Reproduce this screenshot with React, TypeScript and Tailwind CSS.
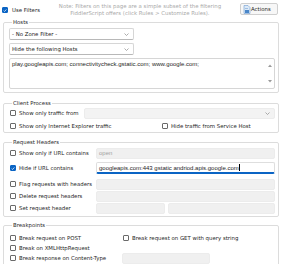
import React from "react";

const FONT = "font-['DejaVu_Sans','Liberation_Sans',sans-serif]";
const FIELD_FONT = "font-['Liberation_Sans',sans-serif] text-[6px]";

function Check({ on = false }: { on?: boolean }) {
  return (
    <span
      className={
        on
          ? "shrink-0 w-[6px] h-[6px] rounded-[1px] bg-[#0a64c4] border border-[#0a64c4] flex items-center justify-center"
          : "shrink-0 w-[6px] h-[6px] rounded-[1px] bg-white border border-[#6a6a6a]"
      }
    >
      {on && (
        <svg width="5" height="5" viewBox="0 0 5 5">
          <path d="M0.8 2.6 L2 3.7 L4.2 1.2" fill="none" stroke="#fff" strokeWidth="0.9" />
        </svg>
      )}
    </span>
  );
}

function Chevron() {
  return (
    <svg width="5" height="3" viewBox="0 0 5 3" className="shrink-0">
      <path d="M0.5 0.5 L2.5 2.5 L4.5 0.5" fill="none" stroke="#8a8a8a" strokeWidth="0.7" />
    </svg>
  );
}

function Select({ label, className }: { label: string; className?: string }) {
  return (
    <div
      className={
        "h-[12px] flex items-center justify-between pl-[2px] pr-[4px] rounded-[2px] border border-[#d6d6d6] border-b-[#b8b8b8] bg-white " +
        (className ?? "")
      }
    >
      <span>{label}</span>
      <Chevron />
    </div>
  );
}

function Box({ text, className }: { text?: string; className?: string }) {
  return (
    <div
      className={
        "h-[11px] flex items-center pl-[2px] rounded-[2px] bg-[#f0f0f0] border border-[#ececec] text-[#a3a3a3] " +
        FIELD_FONT +
        " " +
        (className ?? "")
      }
    >
      {text}
    </div>
  );
}

function Group({ title, className, children }: { title: string; className?: string; children: React.ReactNode }) {
  return (
    <fieldset className={"ml-[3px] w-[276px] border border-[#dcdcdc] rounded-[2px] pl-[5px] pr-[3px] " + (className ?? "")}>
      <legend className="ml-[3px] px-[1px] leading-[8px] text-[#2a2a2a]">{title}</legend>
      {children}
    </fieldset>
  );
}

function Row({ label, on, children }: { label: string; on?: boolean; children?: React.ReactNode }) {
  return (
    <div className="flex items-center h-[12px]">
      <div className="flex items-center w-[87px] shrink-0 pl-[1px]">
        <Check on={on} />
        <span className="ml-[3px] whitespace-nowrap">{label}</span>
      </div>
      {children}
    </div>
  );
}

export default function App() {
  return (
    <div className={"w-[300px] h-[264px] overflow-hidden bg-white text-[5.4px] leading-[8px] text-[#262626] " + FONT}>
      {/* top bar */}
      <div className="flex items-start h-[18px] pl-[2px] pr-[22px]">
        <div className="flex items-center mt-[6px]">
          <Check on />
          <span className="ml-[4px]">Use Filters</span>
        </div>
        <div className="flex-1 text-center text-[#a9a9a9] leading-[7px] mt-[3px] whitespace-nowrap">
          Note: Filters on this page are a simple subset of the filtering
          <br />
          FiddlerScript offers (click Rules &gt; Customize Rules).
        </div>
        <div className="mt-[3px] w-[38px] h-[12px] flex items-center pl-[2px] rounded-[2px] border border-[#cfcfcf] bg-[#f7f7f7]">
          <svg width="8" height="9" viewBox="0 0 8 9" className="shrink-0">
            <path d="M1 0.5 H5 L7 2.5 V8.5 H1 Z" fill="#dbe9f7" stroke="#6d9bd1" strokeWidth="0.6" />
            <rect x="2" y="5" width="4" height="3" fill="#4a86c8" />
            <rect x="2" y="3" width="3" height="0.8" fill="#8fb3dc" />
          </svg>
          <span>Actions</span>
        </div>
      </div>

      <Group title="Hosts" className="pt-[2px] pb-[3px]">
        <Select label="- No Zone Filter -" className="w-[125px]" />
        <Select label="Hide the following Hosts" className="w-[125px] mt-[3px]" />
        <div className="mt-[3px] h-[31px] flex rounded-[2px] border border-[#d6d6d6] bg-white">
          <div className={"flex-1 pl-[2px] pt-[1px] " + FIELD_FONT}>
            play.googleapis.com; connectivitycheck.gstatic.com; www.google.com;
          </div>
          <div className="w-[8px] flex flex-col items-center justify-between py-[5px]">
            <svg width="4" height="3" viewBox="0 0 4 3">
              <path d="M0 3 L2 0.5 L4 3 Z" fill="#9a9a9a" />
            </svg>
            <svg width="4" height="3" viewBox="0 0 4 3">
              <path d="M0 0 L2 2.5 L4 0 Z" fill="#9a9a9a" />
            </svg>
          </div>
        </div>
      </Group>

      <Group title="Client Process" className="mt-[6px]">
        <div className="flex items-center h-[12px]">
          <div className="flex items-center w-[75px] shrink-0 pl-[1px]">
            <Check />
            <span className="ml-[3px] whitespace-nowrap">Show only traffic from</span>
          </div>
          <div className="flex-1 h-[11px] flex items-center justify-end pr-[4px] rounded-[2px] bg-[#f3f3f3] border border-[#ececec]">
            <Chevron />
          </div>
        </div>
        <div className="flex items-center h-[12px] mt-[1px]">
          <div className="flex items-center w-[153px] shrink-0 pl-[1px]">
            <Check />
            <span className="ml-[3px] whitespace-nowrap">Show only Internet Explorer traffic</span>
          </div>
          <Check />
          <span className="ml-[3px] whitespace-nowrap">Hide traffic from Service Host</span>
        </div>
      </Group>

      <Group title="Request Headers" className="mt-[5px] pt-[1px] pb-[2px]">
        <Row label="Show only if URL contains">
          <Box text="open" className="flex-1" />
        </Row>
        <div className="mt-[3px]">
          <Row label="Hide if URL contains" on>
            <div
              className={
                "flex-1 h-[12px] flex items-center pl-[2px] rounded-[2px] bg-white border border-[#dedede] border-b-2 border-b-[#0a64c4] text-[#1e1e1e] " +
                FIELD_FONT
              }
            >
              googleapis.com:443 gstatic andriod.apis.google.com
              <span className="w-[0.5px] h-[7px] bg-black" />
            </div>
          </Row>
        </div>
        <div className="mt-[4px]">
          <Row label="Flag requests with headers">
            <Box className="flex-1" />
          </Row>
          <Row label="Delete request headers">
            <Box className="flex-1" />
          </Row>
          <Row label="Set request header">
            <Box className="w-[69px]" />
            <Box className="flex-1 ml-[3px]" />
          </Row>
        </div>
      </Group>

      <Group title="Breakpoints" className="mt-[4px] pt-[4px] h-[60px]">
        <div className="flex items-center h-[10px] pl-[1px]">
          <div className="flex items-center w-[113px] shrink-0">
            <Check />
            <span className="ml-[3px] whitespace-nowrap">Break request on POST</span>
          </div>
          <Check />
          <span className="ml-[3px] whitespace-nowrap">Break request on GET with query string</span>
        </div>
        <div className="flex items-center h-[10px] pl-[1px]">
          <Check />
          <span className="ml-[3px] whitespace-nowrap">Break on XMLHttpRequest</span>
        </div>
        <div className="flex items-center h-[10px] pl-[1px]">
          <div className="flex items-center w-[112px] shrink-0">
            <Check />
            <span className="ml-[3px] whitespace-nowrap">Break response on Content-Type</span>
          </div>
          <Box className="w-[88px]" />
        </div>
      </Group>
    </div>
  );
}
